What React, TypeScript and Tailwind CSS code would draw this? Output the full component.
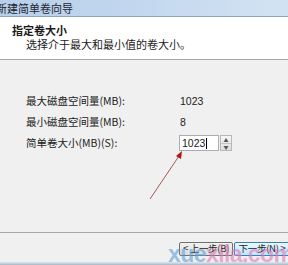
export default function App() {
  const cjk = { fontFamily: '"Noto Sans CJK SC", "Liberation Sans", sans-serif' };
  return (
    <div className="relative flex h-[265px] w-[288px] flex-col overflow-hidden bg-[#f0f0f0] text-[#1a1a1a]" style={cjk}>
      {/* title bar */}
      <div className="flex h-[17px] items-center border-b border-[#8ea4bd] bg-gradient-to-r from-[#b7cfe9] via-[#c3d8ef] to-[#d3e3f3] text-[11px] leading-none">
        <span className="-ml-[4px] whitespace-nowrap text-[#1c2430]">新建简单卷向导</span>
      </div>

      {/* header */}
      <div className="flex h-[43px] flex-col border-b border-[#a8a8a8] bg-white pl-[12px] pt-[7px] text-[11px] leading-[13px]">
        <span className="font-bold">指定卷大小</span>
        <span className="mt-[1px] pl-[14px]">选择介于最大和最小值的卷大小。</span>
      </div>

      {/* body */}
      <div className="flex flex-1 flex-col pl-[26px] pt-[35px] text-[10.5px] leading-[12px] text-[#222]">
        <div className="flex items-center">
          <span className="w-[154px]">最大磁盘空间量(MB):</span>
          <span style={{ fontFamily: '"Liberation Sans", sans-serif' }}>1023</span>
        </div>
        <div className="mt-[9px] flex items-center">
          <span className="w-[154px]">最小磁盘空间量(MB):</span>
          <span style={{ fontFamily: '"Liberation Sans", sans-serif' }}>8</span>
        </div>
        <div className="mt-[7px] flex items-center">
          <span className="w-[153px]">简单卷大小(MB)(S):</span>
          <div className="flex h-[16px] w-[40px] items-center border border-[#abadb3] bg-white pl-[2px]" style={{ fontFamily: '"Liberation Sans", sans-serif' }}>
            1023<span className="ml-[1px] h-[11px] w-px bg-black" />
          </div>
          <div className="ml-[1px] flex h-[16px] w-[12px] flex-col border border-[#b8b8b8] bg-gradient-to-b from-[#f6f6f6] to-[#dedede]">
            <div className="flex flex-1 items-center justify-center border-b border-[#c4c4c4] text-[5px] leading-none text-[#555]">▲</div>
            <div className="flex flex-1 items-center justify-center text-[5px] leading-none text-[#555]">▼</div>
          </div>
        </div>
      </div>

      {/* footer */}
      <div className="flex h-[30px] items-start justify-end border-t border-[#a8a8a8] pt-[9px] text-[9.5px] leading-none">
        <div className="mr-[1px] flex h-[14px] w-[54px] items-center justify-center whitespace-nowrap rounded-[2px] border border-[#707070] bg-gradient-to-b from-[#f2f2f2] to-[#dcdcdc] tracking-[-0.3px]">
          &lt; 上一步(B)
        </div>
        <div className="-mr-[2px] flex h-[14px] w-[56px] items-center justify-center whitespace-nowrap rounded-[2px] border border-[#3c7fb1] bg-gradient-to-b from-[#eaf6fd] to-[#bee6fd] tracking-[-0.3px]">
          下一步(N) &gt;
        </div>
      </div>
      <div className="h-[3px] bg-gradient-to-b from-[#dfe8f0] to-[#a9b8c6]" />

      {/* red arrow */}
      <svg className="pointer-events-none absolute left-0 top-0" width="288" height="265">
        <line x1="150" y1="199" x2="179" y2="156" stroke="#a55a55" strokeWidth="1" />
        <polygon points="182,151 176,156 181,159" fill="#b0161c" />
      </svg>

      {/* watermark */}
      <div className="pointer-events-none absolute left-[168px] top-[243px] whitespace-nowrap text-[23px] font-bold leading-none tracking-tight" style={{ fontFamily: '"Liberation Sans", sans-serif' }}>
        <span className="text-[#5aa0d8]/60">xue</span>
        <span className="text-[#e07ab8]/60">xila.com</span>
      </div>
    </div>
  );
}
